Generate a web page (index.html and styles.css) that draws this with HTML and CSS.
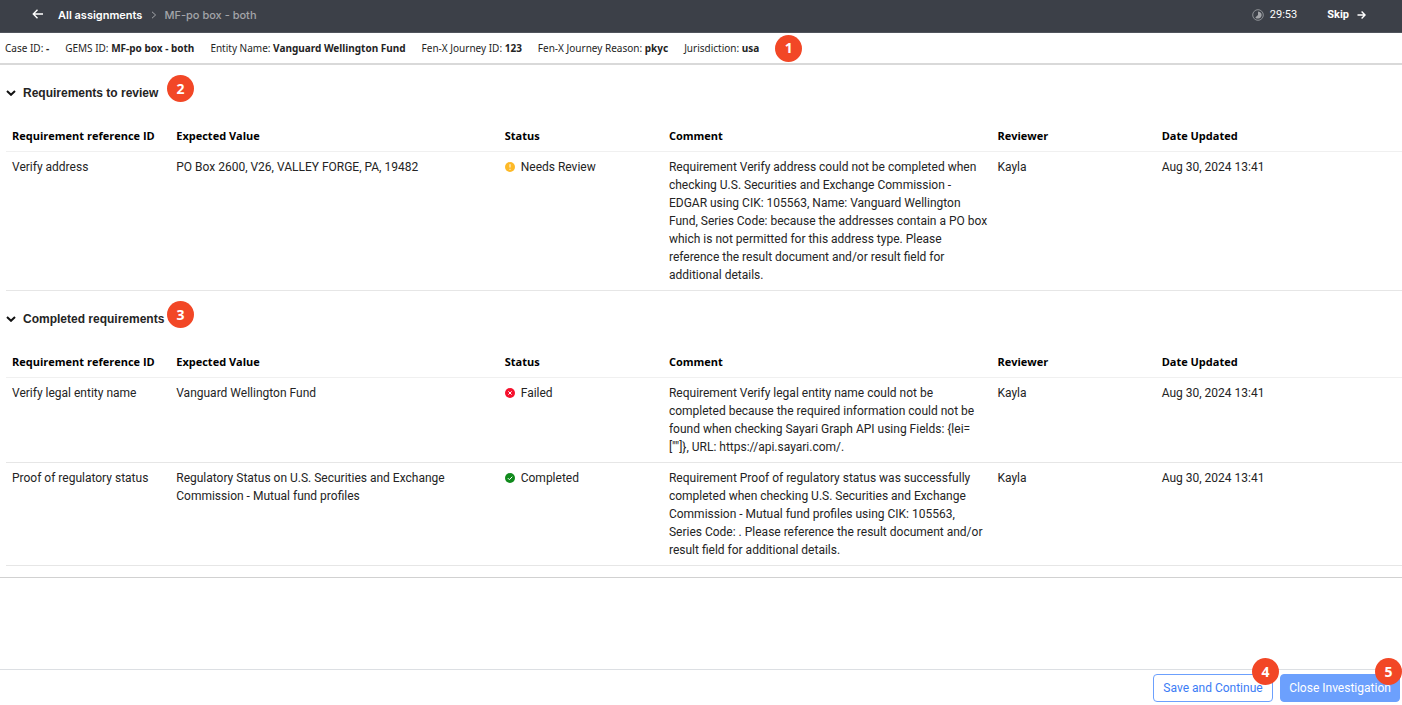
FILE: index.html
```html
<!DOCTYPE html>
<html lang="en">
<head>
    <meta charset="utf-8">
    <title>MF-po box - both</title>
    <link rel="stylesheet" href="styles.css">
</head>
<body>
    <header class="topbar">
        <nav class="breadcrumb">
            <a href="#" class="back" aria-label="Back">
                <svg width="12" height="12" viewBox="0 0 12 12"><path d="M11 5H1.5M5.5.8L1.3 5l4.2 4.2"/></svg>
            </a>
            <a href="#" class="crumb">All assignments</a>
            <svg class="separator" width="6" height="8" viewBox="0 0 6 8"><path d="M1 .8L4.6 4 1 7.2"/></svg>
            <span class="current">MF-po box - both</span>
        </nav>
        <div class="timer">
            <svg width="12" height="12" viewBox="0 0 12 12">
                <circle cx="6" cy="6" r="5.3" fill="none" stroke="#8e9196"/>
                <path d="M6 2.4a3.6 3.6 0 1 1-2.7 6L6 6z" fill="#a3a5a9"/>
            </svg>
            <span>29:53</span>
        </div>
        <button type="button" class="skip">
            Skip
            <svg width="9" height="10" viewBox="0 0 9 10"><path d="M.5 5h7.4M4.6 1.6L8 5 4.6 8.4"/></svg>
        </button>
    </header>

    <section class="case-info">
        <span>Case ID: <b>-</b></span>
        <span>GEMS ID: <b>MF-po box - both</b></span>
        <span>Entity Name: <b>Vanguard Wellington Fund</b></span>
        <span>Fen-X Journey ID: <b>123</b></span>
        <span>Fen-X Journey Reason: <b>pkyc</b></span>
        <span>Jurisdiction: <b>usa</b></span>
        <span class="badge">1</span>
    </section>

    <main class="content">
        <!-- Requirements to review -->
        <div class="section-head">
            <button type="button" class="toggle" aria-expanded="true">
                <svg width="10" height="6" viewBox="0 0 10 6"><path d="M1 1l4 3.8L9 1"/></svg>
                Requirements to review
            </button>
            <span class="badge badge-section">2</span>
        </div>
        <table class="requirements">
            <colgroup>
                <col class="col"><col class="col-wide"><col class="col"><col class="col-wide"><col class="col"><col>
            </colgroup>
            <thead>
                <tr>
                    <th>Requirement reference ID</th>
                    <th>Expected Value</th>
                    <th>Status</th>
                    <th>Comment</th>
                    <th>Reviewer</th>
                    <th>Date Updated</th>
                </tr>
            </thead>
            <tbody>
                <tr>
                    <td>Verify address</td>
                    <td>PO Box 2600, V26, VALLEY FORGE, PA, 19482</td>
                    <td>
                        <div class="status">
                            <svg width="10" height="10" viewBox="0 0 10 10"><circle cx="5" cy="5" r="5" fill="#fdb927"/><path d="M5 2.2v3.3M5 6.8v1"/></svg>
                            Needs Review
                        </div>
                    </td>
                    <td>Requirement Verify address could not be completed when checking U.S. Securities and Exchange Commission - EDGAR using CIK: 105563, Name: Vanguard Wellington Fund, Series Code: because the addresses contain a PO box which is not permitted for this address type. Please reference the result document and/or result field for additional details.</td>
                    <td>Kayla</td>
                    <td>Aug 30, 2024 13:41</td>
                </tr>
            </tbody>
        </table>

        <!-- Completed requirements -->
        <div class="section-head">
            <button type="button" class="toggle" aria-expanded="true">
                <svg width="10" height="6" viewBox="0 0 10 6"><path d="M1 1l4 3.8L9 1"/></svg>
                Completed requirements
            </button>
            <span class="badge badge-section">3</span>
        </div>
        <table class="requirements">
            <colgroup>
                <col class="col"><col class="col-wide"><col class="col"><col class="col-wide"><col class="col"><col>
            </colgroup>
            <thead>
                <tr>
                    <th>Requirement reference ID</th>
                    <th>Expected Value</th>
                    <th>Status</th>
                    <th>Comment</th>
                    <th>Reviewer</th>
                    <th>Date Updated</th>
                </tr>
            </thead>
            <tbody>
                <tr>
                    <td>Verify legal entity name</td>
                    <td>Vanguard Wellington Fund</td>
                    <td>
                        <div class="status">
                            <svg width="10" height="10" viewBox="0 0 10 10"><circle cx="5" cy="5" r="5" fill="#f5112d"/><path d="M3.4 3.4l3.2 3.2M6.6 3.4L3.4 6.6"/></svg>
                            Failed
                        </div>
                    </td>
                    <td>Requirement Verify legal entity name could not be completed because the required information could not be found when checking Sayari Graph API using Fields: {lei=<wbr>[""]}, URL: https://api.sayari.com/.</td>
                    <td>Kayla</td>
                    <td>Aug 30, 2024 13:41</td>
                </tr>
                <tr>
                    <td>Proof of regulatory status</td>
                    <td>Regulatory Status on U.S. Securities and Exchange Commission - Mutual fund profiles</td>
                    <td>
                        <div class="status">
                            <svg width="10" height="10" viewBox="0 0 10 10"><circle cx="5" cy="5" r="5" fill="#108a1c"/><path d="M2.8 5.1l1.6 1.6 2.9-3"/></svg>
                            Completed
                        </div>
                    </td>
                    <td>Requirement Proof of regulatory status was successfully completed when checking U.S. Securities and Exchange Commission - Mutual fund profiles using CIK: 105563, Series Code: . Please reference the result document and/or result field for additional details.</td>
                    <td>Kayla</td>
                    <td>Aug 30, 2024 13:41</td>
                </tr>
            </tbody>
        </table>
    </main>

    <footer class="actions">
        <div class="action">
            <button type="button" class="btn btn-outline">Save and Continue</button>
            <span class="badge badge-save">4</span>
        </div>
        <div class="action">
            <button type="button" class="btn btn-primary">Close Investigation</button>
            <span class="badge badge-close">5</span>
        </div>
    </footer>
</body>
</html>
```
FILE: styles.css
```css
* {
    box-sizing: border-box;
}

body {
    margin: 0;
    min-height: 100vh;
    display: flex;
    flex-direction: column;
    background: #fff;
    color: #242424;
    font-family: "Segoe UI", Roboto, sans-serif;
    font-size: 12px;
    line-height: 18px;
}

button {
    font: inherit;
    cursor: pointer;
}

/* Top bar */
.topbar {
    display: flex;
    align-items: center;
    height: 33px;
    padding: 0 36px 3px 32px;
    background: #3c4048;
    border-bottom: 1px solid #50545c;
    color: #fff;
    font-size: 11px;
}

.topbar svg {
    display: block;
    flex: none;
}

.back path,
.separator path,
.skip path {
    fill: none;
    stroke: #fff;
    stroke-width: 1.4;
}

.breadcrumb {
    display: flex;
    align-items: center;
    margin-right: auto;
    font-family: Inter, Arial, sans-serif;
}

.crumb {
    margin: 0 9px 0 14px;
    color: #fff;
    font-weight: 600;
    text-decoration: none;
}

.separator path {
    stroke: #a3a5a9;
    stroke-width: 1;
}

.current {
    margin-left: 7px;
    color: #a3a5a9;
    font-weight: 500;
}

.timer {
    display: flex;
    align-items: center;
    gap: 6px;
    margin-right: 30px;
}

.skip {
    display: flex;
    align-items: center;
    gap: 8px;
    padding: 0;
    border: 0;
    background: none;
    color: #fff;
    font-weight: bold;
}

/* Case details */
.case-info {
    display: flex;
    align-items: center;
    gap: 16px;
    height: 32px;
    padding-left: 5px;
    border-bottom: 2px solid #d9d9d9;
    font-family: "Segoe UI", "Noto Sans", sans-serif;
    font-size: 10px;
    white-space: nowrap;
}

.badge {
    display: flex;
    align-items: center;
    justify-content: center;
    width: 27px;
    height: 27px;
    border-radius: 50%;
    background: #f24726;
    color: #fff;
    font-family: "Open Sans", "Noto Sans", sans-serif;
    font-size: 14px;
    font-weight: bold;
    line-height: 18px;
}

/* Requirement sections */
.content {
    padding: 0 0 11px 6px;
    border-bottom: 1px solid #d1d1d1;
}

.section-head {
    position: relative;
    display: flex;
    align-items: center;
    height: 56px;
}

.toggle {
    display: flex;
    align-items: center;
    gap: 7px;
    padding: 0;
    border: 0;
    background: none;
    color: #242424;
    font-family: "Liberation Sans", Arial, sans-serif;
    font-weight: bold;
}

.toggle path {
    fill: none;
    stroke: #111;
    stroke-width: 2;
}

.badge-section {
    position: absolute;
    left: 161px;
    top: 10px;
}

.requirements {
    width: 100%;
    table-layout: fixed;
    border-spacing: 0;
}

.col {
    width: 11.765%;
}

.col-wide {
    width: 23.53%;
}

.requirements th,
.requirements td {
    padding: 6px 2px 6px 6px;
    border-bottom: 1px solid #e6e6e6;
    text-align: left;
    vertical-align: top;
}

.requirements th {
    border-color: #f0f0f0;
    color: #000;
    font-family: "Segoe UI", "Open Sans", sans-serif;
    font-size: 11px;
    white-space: nowrap;
}

.status {
    display: flex;
    align-items: center;
    gap: 6px;
}

.status path {
    fill: none;
    stroke: #fff;
}

/* Footer buttons */
.actions {
    display: flex;
    justify-content: flex-end;
    gap: 7px;
    margin-top: auto;
    padding: 4px 2px 3px;
    border-top: 1px solid #dcdfe3;
}

.action {
    position: relative;
}

.btn {
    width: 120px;
    height: 28px;
    padding: 0;
    border: 1px solid #6ca0fd;
    border-radius: 4px;
    white-space: nowrap;
}

.btn-outline {
    background: #fff;
    color: #3b7cf5;
}

.btn-primary {
    background: #6ca0fd;
    color: #fff;
}

.badge-save,
.badge-close {
    position: absolute;
    top: -16px;
    right: -6px;
}

.badge-close {
    right: -2px;
}
```
